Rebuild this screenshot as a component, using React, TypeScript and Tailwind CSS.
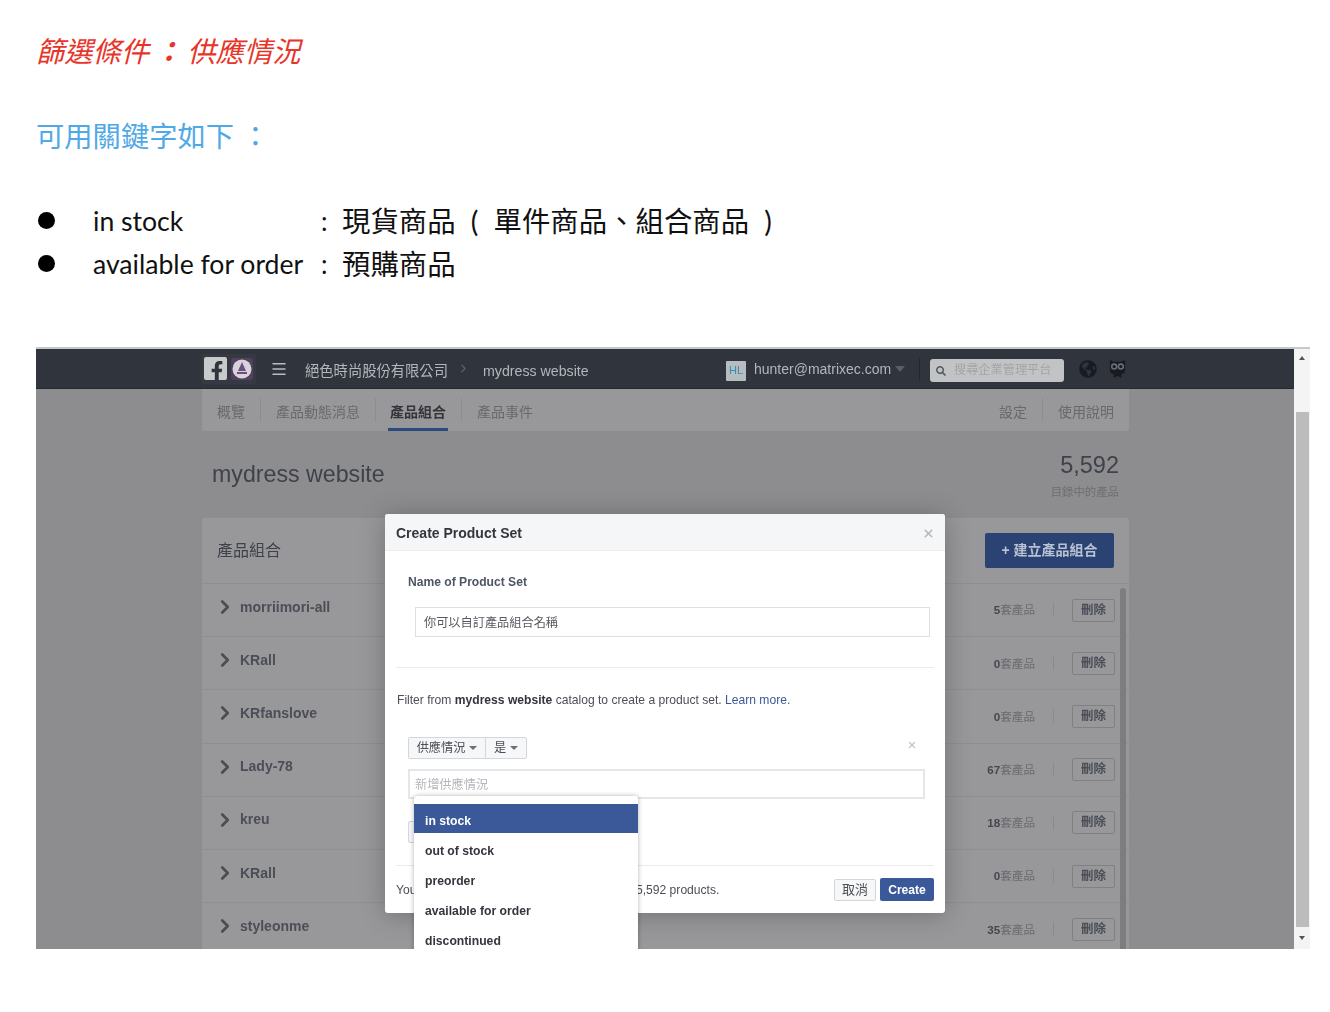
import { ChevronRight, Menu, X } from "lucide-react";
import { FaFacebookF, FaGlobeAmericas, FaSearch } from "react-icons/fa";

const sans = "font-['Liberation_Sans','Noto_Sans_CJK_TC',sans-serif]";
const docFont = "font-['Lato','Noto_Sans_CJK_TC',sans-serif]";

const rows = [
  ["morriimori-all", "5"],
  ["KRall", "0"],
  ["KRfanslove", "0"],
  ["Lady-78", "67"],
  ["kreu", "18"],
  ["KRall", "0"],
  ["styleonme", "35"],
];

const options = ["out of stock", "preorder", "available for order", "discontinued"];

function Caret({ className }: { className: string }) {
  return <span className={`inline-block w-0 h-0 border-x-[4px] border-x-transparent border-t-[4px] ${className}`} />;
}

function Owl() {
  return (
    <svg width="19" height="21" viewBox="0 0 20 22" className="shrink-0">
      <path d="M2 2 L6 4 H14 L18 2 V13 Q18 16 14 17 L14 21 L10 19 L6 21 L6 17 Q2 16 2 13 Z" fill="#191b20" />
      <circle cx="6.5" cy="9" r="3.4" fill="#6b6e74" />
      <circle cx="13.5" cy="9" r="3.4" fill="#6b6e74" />
      <circle cx="6.5" cy="9" r="1.7" fill="#191b20" />
      <circle cx="13.5" cy="9" r="1.7" fill="#191b20" />
    </svg>
  );
}

function BrandBadge() {
  return (
    <svg width="22" height="22" viewBox="0 0 22 22" className="shrink-0">
      <rect width="22" height="22" rx="3" fill="#53405f" />
      <circle cx="11" cy="11" r="9.5" fill="#d8d4da" />
      <path d="M11 4 L15 13 H7 Z" fill="#6b4f82" />
      <rect x="6" y="14" width="10" height="2" fill="#6b4f82" />
    </svg>
  );
}

function NavBar() {
  return (
    <div className="h-[40px] shrink-0 bg-[#30343d] border-b border-[#26292f] flex items-center pl-[166px] text-[#b4b6ba] text-sm">
      <div className="flex items-center gap-[4px] w-[54px] h-[30px] bg-[#353942] pl-[2px]">
        <div className="w-[23px] h-[23px] bg-[#c9cacc] rounded-[2px] flex items-end justify-end overflow-hidden">
          <FaFacebookF className="text-[#30343d] text-[20px] -mb-[1px]" />
        </div>
        <BrandBadge />
      </div>
      <Menu className="ml-[14px] text-[#b9bbbf]" size={18} strokeWidth={2} />
      <span className="ml-[17px] mt-[6px] w-[143px] text-[14.3px] whitespace-nowrap">絕色時尚股份有限公司</span>
      <ChevronRight className="ml-[9px] text-[#5b5f68]" size={13} strokeWidth={2.5} />
      <span className="ml-[13px] mt-[5px] text-[14.2px] w-[105px] whitespace-nowrap">mydress website</span>
      <div className="ml-[138px] mt-[5px] w-[20px] h-[20px] bg-[#b6bcc0] flex items-center justify-center text-[11px] text-[#3a8fb0] rounded-[1px]">HL</div>
      <span className="ml-[8px] text-[14px] w-[137px] whitespace-nowrap">hunter@matrixec.com</span>
      <Caret className="ml-[4px] border-t-[#5a5e66] border-x-[5px] border-t-[6px]" />
      <div className="ml-[14px] w-px h-[22px] bg-[#24272d]" />
      <div className="ml-[10px] mt-[4px] w-[134px] h-[23px] bg-[#c2c3c5] rounded-[3px] flex items-center pl-[6px] gap-[8px]">
        <FaSearch className="text-[#555a62] text-[10px]" />
        <span className="text-[12.2px] text-[#a3a4a7] whitespace-nowrap">搜尋企業管理平台</span>
      </div>
      <FaGlobeAmericas className="ml-[15px] text-[#191b20] text-[18px]" />
      <div className="ml-[11px]"><Owl /></div>
    </div>
  );
}

function Tabs() {
  return (
    <div className="h-[42px] shrink-0 bg-[#98989a] rounded-b-[2px] flex items-center text-[#68696d] text-[14px] whitespace-nowrap">
      <span className="ml-[15px] mt-[5px]">概覽</span>
      <span className="ml-[15px] w-px h-[24px] bg-[#8d8d8f]" />
      <span className="ml-[15px] mt-[5px]">產品動態消息</span>
      <span className="ml-[15px] w-px h-[24px] bg-[#8d8d8f]" />
      <span className="ml-[13px] h-full relative flex items-center pt-[5px] px-[1px] font-bold text-[#33353b]">
        產品組合
        <span className="absolute left-0 right-0 -mx-[1px] bottom-0 h-[3px] bg-[#2c4a80]" />
      </span>
      <span className="ml-[14px] w-px h-[24px] bg-[#8d8d8f]" />
      <span className="ml-[15px] mt-[5px]">產品事件</span>
      <span className="ml-auto mt-[5px]">設定</span>
      <span className="ml-[15px] w-px h-[24px] bg-[#8d8d8f]" />
      <span className="ml-[15px] mr-[15px] mt-[5px]">使用說明</span>
    </div>
  );
}

function Row({ name, count }: { name: string; count: string }) {
  return (
    <div className="h-[53.2px] shrink-0 border-b border-[#8f8f91] flex items-center">
      <ChevronRight className="ml-[12px] -mt-[6px] text-[#4b4e57]" size={22} strokeWidth={3} />
      <span className="ml-[4px] -mt-[6px] text-[14px] font-bold text-[#4b4e57]">{name}</span>
      <span className="ml-auto text-[11.6px] text-[#6a6b6f] whitespace-nowrap">
        <b className="text-[#44474f]">{count}</b>套產品
      </span>
      <span className="ml-[18px] w-px h-[14px] bg-[#8a8a8c]" />
      <span className="ml-[18px] mr-[14px] w-[43px] h-[23px] border border-[#808083] rounded-[2px] bg-[#98989a] flex items-center justify-center text-[12.5px] font-bold text-[#4b4e57]">
        刪除
      </span>
    </div>
  );
}

function Modal() {
  return (
    <div className="absolute left-[349px] top-[165px] w-[560px] h-[399px] bg-white rounded-[3px] shadow-[0_2px_26px_rgba(0,0,0,0.25)] flex flex-col text-[12.1px] text-[#4b4f56]">
      <div className="h-[37px] shrink-0 bg-[#f5f6f7] border-b border-[#eceef0] rounded-t-[3px] flex items-center justify-between pl-[11px] pr-[10px] pt-[2px]">
        <span className="text-[14px] font-bold text-[#33363c]">Create Product Set</span>
        <X size={13} strokeWidth={3} className="text-[#b4b7bc]" />
      </div>
      <div className="flex-1 flex flex-col">
        <div className="ml-[23px] mt-[22px] font-bold text-[#4e5665]">Name of Product Set</div>
        <div className="ml-[30px] mr-[15px] mt-[16px] h-[30px] border border-[#dddfe2] flex items-center px-[8px] pt-[2px] text-[12.2px] text-[#55585e]">你可以自訂產品組合名稱</div>
        <div className="mx-[11px] mt-[30px] h-px bg-[#e9ebee]" />
        <div className="ml-[12px] mt-[25px] h-[14px] leading-[14px] text-[#4b4f56] whitespace-nowrap">
          Filter from <b className="text-[#33363c]">mydress website</b> catalog to create a product set. <span className="text-[#3b5998]">Learn more.</span>
        </div>
        <div className="ml-[23px] mr-[28px] mt-[30px] flex items-center">
          <div className="h-[22px] flex items-center border border-[#d3d6db] rounded-[2px] bg-[#f6f7f9] text-[12.2px] text-[#4b4f56]">
            <span className="w-[77px] flex items-center justify-center gap-[4px] border-r border-[#d3d6db] h-full">供應情況<Caret className="border-t-[#6b6f76]" /></span>
            <span className="w-[40px] flex items-center justify-center gap-[4px]">是<Caret className="border-t-[#6b6f76]" /></span>
          </div>
          <X size={10} strokeWidth={3} className="ml-auto -mt-[6px] text-[#c0c3c8]" />
        </div>
        <div className="ml-[23px] mr-[20px] mt-[10px] h-[30px] border-2 border-[#e4e6ea] flex items-center px-[5px] pt-[3px] text-[12.2px] text-[#b3b6bc]">新增供應情況</div>
        <div className="ml-[23px] mt-[22px] w-[40px] h-[22px] border border-[#d3d6db] rounded-[2px] bg-[#f6f7f9]" />
        <div className="mx-[11px] mt-[22px] h-px bg-[#e9ebee]" />
        <div className="mx-[11px] mt-[12px] flex items-center">
          <span className="w-[240px] mt-[1px]">You</span>
          <span className="whitespace-nowrap mt-[1px]">5,592 products.</span>
          <span className="ml-auto w-[42px] h-[22px] border border-[#d3d6db] rounded-[2px] bg-[#f6f7f9] flex items-center justify-center text-[13px]">取消</span>
          <span className="ml-[4px] w-[54px] h-[23px] rounded-[2px] bg-[#3b5998] flex items-center justify-center font-bold text-white">Create</span>
        </div>
      </div>
    </div>
  );
}

function Dropdown() {
  return (
    <div className="absolute left-[378px] top-[447px] w-[224px] h-[170px] bg-white rounded-t-[3px] shadow-[0_0_5px_rgba(0,0,0,0.3)] pt-[8px] text-[12.2px] font-bold text-[#33363c]">
      <div className="h-[29px] mb-[3px] bg-[#3b5998] text-white flex items-end pb-[3px] pl-[11px]">in stock</div>
      {options.map((o) => (
        <div key={o} className="h-[30px] flex items-center pl-[11px]">{o}</div>
      ))}
    </div>
  );
}

function ShotScrollbar() {
  return (
    <div className="w-[16px] shrink-0 bg-[#f4f4f4] flex flex-col items-center">
      <div className="h-[24px] pt-[7px] flex justify-center">
        <span className="w-0 h-0 border-x-[3.5px] border-x-transparent border-b-[4px] border-b-[#555]" />
      </div>
      <div className="flex-1 w-[13px] bg-[#bcbcbc] mt-[39px]" />
      <div className="h-[22px] pt-[9px] flex justify-center">
        <span className="w-0 h-0 border-x-[3.5px] border-x-transparent border-t-[4px] border-t-[#555]" />
      </div>
    </div>
  );
}

function Screenshot() {
  return (
    <div className={`ml-[36px] mt-[60px] w-[1274px] h-[602px] overflow-hidden flex flex-col border-t-2 border-[#c8c8c8] blur-[0.5px] ${sans}`}>
      <div className="flex-1 flex min-h-0">
        <div className="relative w-[1258px] shrink-0 bg-[#8d8d8f] flex flex-col overflow-hidden">
          <NavBar />
          <div className="w-[927px] ml-[166px] flex-1 flex flex-col min-h-0">
            <Tabs />
            <div className="h-[87px] shrink-0 flex justify-between px-[10px]">
              <span className="mt-[28px] text-[23.2px] leading-[30px] text-[#3f424a]">mydress website</span>
              <div className="mt-[20px] flex flex-col items-end">
                <span className="text-[23.5px] leading-[28px] text-[#3f424a]">5,592</span>
                <span className="mt-[5px] text-[11.4px] text-[#6d6e72]">目錄中的產品</span>
              </div>
            </div>
            <div className="flex-1 relative bg-[#98989a] rounded-t-[2px] min-h-0 flex flex-col overflow-hidden">
              <div className="h-[66px] shrink-0 border-b border-[#8f8f91] flex items-center justify-between pl-[15px] pr-[15px]">
                <span className="text-[16px] text-[#3f424a]">產品組合</span>
                <span className="w-[129px] h-[35px] bg-[#2a4373] rounded-[2px] flex items-center justify-center text-[14px] font-semibold text-[#b9c1d2]">+ 建立產品組合</span>
              </div>
              <div>
                {rows.map((r, i) => (
                  <Row key={i} name={r[0]} count={r[1]} />
                ))}
              </div>
              <div className="absolute right-[3px] top-[70px] bottom-0 w-[6px] rounded-t-[3px] bg-[#7d7d80]" />
            </div>
          </div>
          <Modal />
          <Dropdown />
        </div>
        <ShotScrollbar />
      </div>
    </div>
  );
}

export default function App() {
  return (
    <div className="min-h-[1012px] bg-white">
      <div className={`pl-[36px] pt-[31px] ${docFont}`}>
        <div className="h-[40px] leading-[40px] text-[28.3px] italic text-[#e8352a] whitespace-pre flex">
          <span>篩選條件</span>
          <span className="w-[38px] text-center font-bold">：</span>
          <span>供應情況</span>
        </div>
        <div className="mt-[45px] h-[40px] leading-[40px] text-[28.3px] text-[#4fa9e6] whitespace-pre">可用關鍵字如下 ：</div>
        <div className="mt-[45px] text-[#111]">
          <div className="h-[43px] flex items-center">
            <span className="ml-[2px] w-[17px] h-[17px] rounded-full bg-black shrink-0 -mt-[5px]" />
            <span className="ml-[38px] -mt-[2px] w-[228px] text-[26.6px] whitespace-nowrap">in stock</span>
            <span className="-mt-[2px] text-[26px] w-[21px]">:</span>
            <span className="-mt-[2px] text-[28.4px] whitespace-pre flex">
              <span>現貨商品</span>
              <span className="w-[38px] text-center">(</span>
              <span>單件商品、組合商品</span>
              <span className="w-[38px] text-center">)</span>
            </span>
          </div>
          <div className="h-[43px] flex items-center">
            <span className="ml-[2px] w-[17px] h-[17px] rounded-full bg-black shrink-0 -mt-[5px]" />
            <span className="ml-[38px] -mt-[2px] w-[228px] text-[26.6px] whitespace-nowrap">available for order</span>
            <span className="-mt-[2px] text-[26px] w-[21px]">:</span>
            <span className="-mt-[2px] text-[28.4px] whitespace-pre">預購商品</span>
          </div>
        </div>
      </div>
      <Screenshot />
    </div>
  );
}
